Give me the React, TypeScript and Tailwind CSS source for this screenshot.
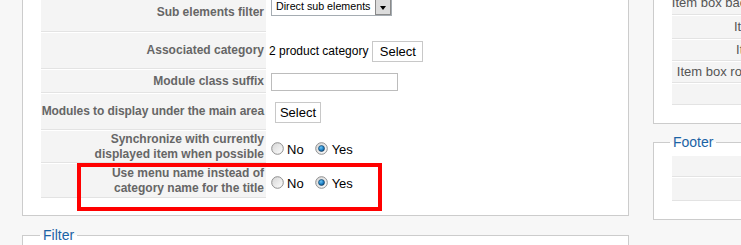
import { useId } from "react";

const Radio = ({ checked }: { checked?: boolean }) => {
  const id = useId().replace(/:/g, "");
  return (
    <svg width="13" height="13" viewBox="0 0 13 13" className="shrink-0">
      <defs>
        <linearGradient id={`g${id}`} x1="0" y1="0" x2="1" y2="1">
          <stop offset="0" stopColor="#d4d4d4" />
          <stop offset="1" stopColor="#ffffff" />
        </linearGradient>
        <radialGradient id={`d${id}`} cx="0.4" cy="0.35" r="0.7">
          <stop offset="0" stopColor="#6cc4f4" />
          <stop offset="0.6" stopColor="#1c7fc4" />
          <stop offset="1" stopColor="#0c3f6e" />
        </radialGradient>
      </defs>
      <circle cx="6.5" cy="6.5" r="5.8" fill={`url(#g${id})`} stroke="#8e8e8e" strokeWidth="1" />
      {checked && <circle cx="6.5" cy="6.5" r="3" fill={`url(#d${id})`} stroke="#163e5e" strokeWidth="0.6" />}
    </svg>
  );
};

const YesNo = () => (
  <div className="ml-[4px] mt-[3px] flex items-center text-[13px] text-black">
    <Radio />
    <span className="ml-[3px] mt-[2px]">No</span>
    <span className="ml-[11px] flex">
      <Radio checked />
    </span>
    <span className="ml-[4px] mt-[2px]">Yes</span>
  </div>
);

const SelectButton = ({ className }: { className: string }) => (
  <button className={`h-[21px] border border-[#c8c8c8] bg-white text-[13px] leading-[19px] text-black ${className}`}>
    Select
  </button>
);

const rows = [
  {
    h: "h-[38px]",
    label: "Sub elements filter",
    value: (
      <div className="ml-[4px] mt-[3px] flex h-[19px] w-[121px] self-start border border-[#a5acb2] bg-white">
        <span className="flex-1 pl-[4px] text-[10.7px] leading-[16px] text-black">Direct sub elements</span>
        <span className="flex w-[16px] items-center justify-center border border-[#8a8a8a] bg-[#dcdcdc]">
          <span className="mt-[2px] h-0 w-0 border-x-[3.5px] border-t-[4px] border-x-transparent border-t-black" />
        </span>
      </div>
    ),
  },
  {
    h: "h-[36px]",
    label: "Associated category",
    value: (
      <div className="ml-[2px] flex items-center text-[12px] text-black">
        2 product category
        <SelectButton className="ml-[4px] w-[51px]" />
      </div>
    ),
  },
  {
    h: "h-[23px]",
    label: "Module class suffix",
    value: <div className="ml-[4px] h-[18px] w-[127px] border border-[#bcbcbc] bg-white" />,
  },
  {
    h: "h-[36px]",
    label: <span className="tracking-[-0.08px]">Modules to display under the main area</span>,
    value: <SelectButton className="ml-[8px] w-[46px]" />,
  },
  {
    h: "h-[32px]",
    label: (
      <>
        Synchronize with currently
        <br />
        displayed item when possible
      </>
    ),
    value: <YesNo />,
  },
  {
    h: "h-[34px]",
    label: (
      <>
        Use menu name instead of
        <br />
        category name for the title
      </>
    ),
    value: <YesNo />,
  },
];

const sideRows = [
  { h: "h-[23px]", label: "Item box background color" },
  { h: "h-[23px]", label: "Item box border" },
  { h: "h-[21px]", label: "Item box height" },
  { h: "h-[21px]", label: "Item box rounded corners" },
  { h: "h-[21px]", label: "" },
];

const App = () => {
  return (
    <div className="relative flex h-[245px] w-[741px] overflow-hidden bg-[#f7f7f7] font-['Liberation_Sans',Arial,sans-serif]">
      <div className="ml-[22px] flex w-[607px] shrink-0 flex-col">
        <div className="-mt-[6px] flex flex-col gap-px border-x border-b border-[#cccccc] bg-white pb-[17px] pl-[18px]">
          {rows.map((r, i) => (
            <div key={i} className={`flex ${r.h}`}>
              <div className="flex w-[225px] shrink-0 items-center justify-end whitespace-nowrap border-b border-[#e3e3e3] bg-[#f4f4f4] pr-[2px] text-right text-[12px] font-bold leading-[15px] text-[#666666]">
                <span>{r.label}</span>
              </div>
              <div className="flex items-center pl-[1px]">{r.value}</div>
            </div>
          ))}
        </div>
        <fieldset className="mt-[11px] h-[40px] border-x border-t border-[#cccccc] bg-white">
          <legend className="ml-[17px] px-[3px] text-[14px] leading-[17px] text-[#1b63a5]">Filter</legend>
        </fieldset>
      </div>

      <div className="ml-[24px] flex w-[400px] shrink-0 flex-col">
        <div className="-mt-[8px] flex flex-col gap-px border-b border-l border-[#cccccc] bg-white pb-[18px] pl-[18px]">
          {sideRows.map((r, i) => (
            <div key={i} className={`flex ${r.h}`}>
              <div className="flex w-[155px] shrink-0 items-center justify-end whitespace-nowrap border-b border-[#e3e3e3] bg-[#f4f4f4] pr-[2px] text-[13px] text-[#555555]">
                {r.label}
              </div>
              <div className="flex-1" />
            </div>
          ))}
        </div>
        <fieldset className="mt-[10px] border-b border-l border-t border-[#cccccc] bg-white pb-[18px] pl-[18px] pt-[5px]">
          <legend className="-ml-[2px] px-[3px] text-[14px] leading-[17px] text-[#1b63a5]">Footer</legend>
          <div className="flex flex-col gap-px">
            <div className="h-[21px] w-[200px] border-b border-[#e3e3e3] bg-[#f4f4f4]" />
            <div className="h-[23px] w-[200px] border-b border-[#e3e3e3] bg-[#f4f4f4]" />
          </div>
        </fieldset>
      </div>

      <div className="absolute left-[77px] top-[163px] h-[48px] w-[305px] border-4 border-[#ff0000]" />
    </div>
  );
};

export default App;
